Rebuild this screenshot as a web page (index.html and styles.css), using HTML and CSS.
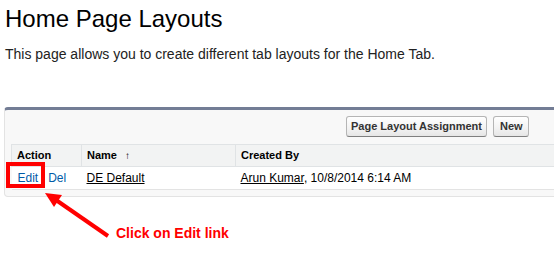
FILE: index.html
```html
<!DOCTYPE html>
<html>
<head>
<meta charset="utf-8">
<link rel="stylesheet" href="styles.css">
</head>
<body>
<h1 class="title">Home Page Layouts</h1>
<p class="intro">This page allows you to create different tab layouts for the Home Tab.</p>
<div class="panel">
  <div class="buttons">
    <button class="btn">Page Layout Assignment</button>
    <button class="btn btn-short">New</button>
  </div>
  <table class="list">
    <colgroup><col class="c-action"><col class="c-name"><col></colgroup>
    <thead>
      <tr><th>Action</th><th>Name <span class="sort">&#8593;</span></th><th>Created By</th></tr>
    </thead>
    <tbody>
      <tr>
        <td><a class="act" href="#">Edit</a><a class="act del" href="#">Del</a></td>
        <td><a class="plain" href="#">DE Default</a></td>
        <td><a class="plain" href="#">Arun Kumar</a>, 10/8/2014 6:14 AM</td>
      </tr>
    </tbody>
  </table>
</div>
<p class="note">Click on Edit link</p>
<div class="highlight"></div>
<svg class="arrow" width="554" height="264" viewBox="0 0 554 264">
  <line x1="108" y1="236" x2="56" y2="200" stroke="#f00" stroke-width="4"/>
  <polygon points="45,193 62,195 54,207" fill="#f00"/>
</svg>
</body>
</html>
```
FILE: styles.css
```css
html, body {
  margin: 0;
  padding: 0;
  overflow: hidden;
}
body {
  width: 554px;
  height: 264px;
  position: relative;
  background: #fff;
  font-family: "Liberation Sans", Arial, sans-serif;
  color: #000;
}
.title {
  margin: 5px 0 0 5px;
  font-size: 24px;
  font-weight: normal;
  line-height: 28px;
  color: #000;
}
.intro {
  margin: 13px 0 0 5px;
  font-size: 14px;
  line-height: 16px;
  color: #222;
}
.panel {
  margin: 45px 0 0 4px;
  width: 580px;
  background: #f8f8f8;
  border: 1px solid #e3e3e3;
  border-top: 3px solid #737d95;
  border-radius: 4px;
  padding: 6px 0 6px 6px;
}
.buttons {
  display: flex;
  justify-content: flex-end;
  gap: 6px;
  padding-right: 62px;
}
.btn {
  height: 21px;
  margin: 0;
  padding: 0 4px;
  border: 1px solid #b5b5b5;
  border-bottom-color: #7f7f7f;
  border-radius: 3px;
  background: linear-gradient(#ffffff, #f2f2f2 60%, #e6e6e6);
  font-family: "Liberation Sans", Arial, sans-serif;
  font-size: 11px;
  font-weight: bold;
  color: #333;
  line-height: 19px;
}
.btn-short {
  padding: 0 6px;
  width: 36px;
}
.list {
  margin-top: 7px;
  width: 100%;
  border-collapse: collapse;
  table-layout: fixed;
}
.c-action { width: 70px; }
.c-name { width: 154px; }
.list th {
  text-align: left;
  background: #f2f3f3;
  border: 1px solid #e0e3e5;
  font-size: 11px;
  font-weight: bold;
  line-height: 13px;
  padding: 4px 5px 4px 5px;
  color: #000;
  white-space: nowrap;
}
.sort {
  display: inline-block;
  margin-left: 5px;
  font-size: 10px;
  font-weight: bold;
}
.list td {
  background: #fff;
  border-bottom: 1px solid #e3e3e3;
  font-size: 12px;
  line-height: 14px;
  padding: 4px 5px 4px 5px;
  white-space: nowrap;
  color: #000;
}
.list td:first-child { padding-left: 6px; }
.act {
  color: #015ba7;
  text-decoration: none;
}
.del { margin-left: 10px; }
.plain {
  color: #000;
  text-decoration: underline;
}
.note {
  margin: 28px 0 0 116px;
  font-size: 14px;
  font-weight: bold;
  line-height: 16px;
  color: #f00;
}
.highlight {
  position: absolute;
  left: 6px;
  top: 162px;
  width: 39px;
  height: 26px;
  box-sizing: border-box;
  border: 4px solid #f00;
}
.arrow {
  position: absolute;
  left: 0;
  top: 0;
  pointer-events: none;
}
```
